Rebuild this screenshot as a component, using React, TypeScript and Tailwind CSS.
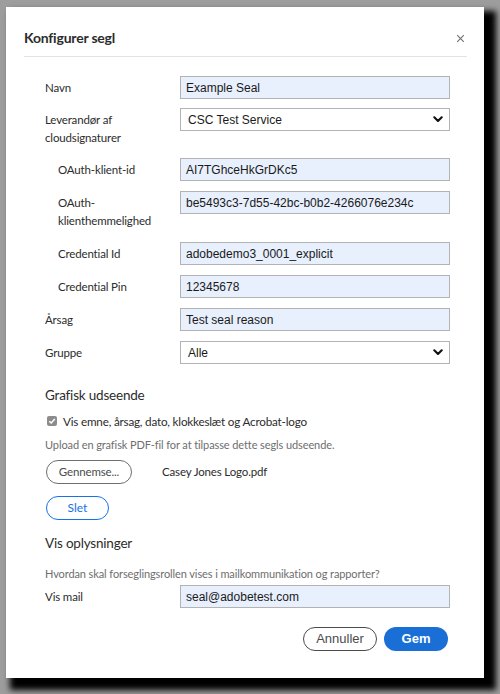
import React from "react";

function Chevron() {
  return (
    <svg width="10" height="7" viewBox="0 0 10 7" className="shrink-0 mr-[1px]">
      <path d="M1.3 1.3 L5 5 L8.7 1.3" fill="none" stroke="#111" strokeWidth="2.1" strokeLinecap="round" strokeLinejoin="round" />
    </svg>
  );
}

function TextInput({ value }: { value: string }) {
  return (
    <div className="w-[270px] h-[23px] bg-[#e8f0fe] border border-[#b3b3b3] flex items-center pl-[5px] text-[12px] text-[#1a1a1a] font-['Liberation_Sans',Arial,sans-serif]">
      {value}
    </div>
  );
}

function SelectInput({ value }: { value: string }) {
  return (
    <div className="w-[270px] h-[23px] bg-white border border-[#b3b3b3] flex items-center justify-between pl-[7px] pr-[5px] text-[12px] text-[#1a1a1a] font-['Liberation_Sans',Arial,sans-serif]">
      <span>{value}</span>
      <Chevron />
    </div>
  );
}

function Row({
  label,
  indent,
  tall,
  mb,
  children,
}: {
  label: React.ReactNode;
  indent?: boolean;
  tall?: boolean;
  mb: string;
  children: React.ReactNode;
}) {
  return (
    <div className={`flex ${tall ? "items-start h-[41px]" : "items-center h-[23px]"} ${mb}`}>
      <div
        className={`w-[135px] shrink-0 text-[11.5px] tracking-[-0.15px] leading-[18px] text-[#2c2c2c] font-['Lato','Open_Sans',sans-serif] ${indent ? "pl-[13px]" : ""} ${tall ? "pt-[3px]" : ""}`}
      >
        {label}
      </div>
      {children}
    </div>
  );
}

export default function App() {
  return (
    <div className="w-[500px] h-[694px] bg-[#9d9d9d] overflow-hidden pt-[7px] pl-[6px]">
      <div className="w-[478px] h-[671px] bg-white shadow-[8px_8px_6px_4px_#000] pl-[18px] pr-[17px] flex flex-col font-['Lato','Open_Sans',sans-serif]">
        <div className="pt-[21px] flex items-center justify-between h-[41px]">
          <div className="text-[14px] tracking-[-0.2px] leading-[20px] font-bold text-[#2c2c2c]">
            Konfigurer segl
          </div>
          <svg width="9" height="9" viewBox="0 0 9 9" className="mr-[2px]">
            <path d="M1.2 1.2 L7.8 7.8 M7.8 1.2 L1.2 7.8" stroke="#707070" strokeWidth="1.1" />
          </svg>
        </div>
        <div className="mt-[8px] border-b border-[#e3e3e3]" />

        <div className="pl-[21px] mt-[19px] flex flex-col">
          <Row label="Navn" mb="mb-[9px]">
            <TextInput value="Example Seal" />
          </Row>
          <Row label={<>Leverandør af<br />cloudsignaturer</>} tall mb="mb-[9px]">
            <SelectInput value="CSC Test Service" />
          </Row>
          <Row label="OAuth-klient-id" indent mb="mb-[10px]">
            <TextInput value="AI7TGhceHkGrDKc5" />
          </Row>
          <Row label={<>OAuth-<br />klienthemmelighed</>} indent tall mb="mb-[10px]">
            <TextInput value="be5493c3-7d55-42bc-b0b2-4266076e234c" />
          </Row>
          <Row label="Credential Id" indent mb="mb-[10px]">
            <TextInput value="adobedemo3_0001_explicit" />
          </Row>
          <Row label="Credential Pin" indent mb="mb-[10px]">
            <TextInput value="12345678" />
          </Row>
          <Row label="Årsag" mb="mb-[10px]">
            <TextInput value="Test seal reason" />
          </Row>
          <Row label="Gruppe" mb="mb-0">
            <SelectInput value="Alle" />
          </Row>

          <div className="mt-[21px] text-[13.5px] tracking-[-0.2px] leading-[20px] text-[#2c2c2c]">
            Grafisk udseende
          </div>
          <div className="mt-[7px] flex items-center h-[18px]">
            <div className="ml-[2px] w-[10px] h-[10px] rounded-[2px] bg-[#8c8c8c] flex items-center justify-center">
              <svg width="8" height="8" viewBox="0 0 8 8">
                <path d="M1.3 4.2 L3.2 6 L6.8 2" fill="none" stroke="#fff" strokeWidth="1.5" />
              </svg>
            </div>
            <span className="ml-[6px] text-[11.7px] tracking-[-0.2px] leading-[18px] text-[#2c2c2c]">
              Vis emne, årsag, dato, klokkeslæt og Acrobat-logo
            </span>
          </div>
          <div className="mt-[7px] text-[11px] tracking-[-0.1px] leading-[16px] text-[#6e6e6e]">
            Upload en grafisk PDF-fil for at tilpasse dette segls udseende.
          </div>
          <div className="mt-[7px] flex items-center">
            <div className="ml-[1px] w-[86px] h-[24px] rounded-full border border-[#6e6e6e] flex items-center justify-center text-[11.5px] tracking-[-0.15px] text-[#4b4b4b]">
              Gennemse...
            </div>
            <span className="ml-[30px] text-[11.5px] tracking-[-0.15px] text-[#2c2c2c]">
              Casey Jones Logo.pdf
            </span>
          </div>
          <div className="mt-[12px] ml-[1px] w-[63px] h-[24px] rounded-full border border-[#1473e6] flex items-center justify-center text-[12px] text-[#1473e6]">
            Slet
          </div>
          <div className="mt-[13px] text-[13.5px] tracking-[-0.2px] leading-[20px] text-[#2c2c2c]">
            Vis oplysninger
          </div>
          <div className="mt-[13px] text-[11px] tracking-[-0.1px] leading-[16px] text-[#6e6e6e]">
            Hvordan skal forseglingsrollen vises i mailkommunikation og rapporter?
          </div>
          <div className="mt-[3px]">
            <Row label="Vis mail" mb="mb-0">
              <TextInput value="seal@adobetest.com" />
            </Row>
          </div>
          <div className="mt-[19px] flex justify-end gap-[7px] pr-[19px] font-['Liberation_Sans',Arial,sans-serif]">
            <div className="w-[74px] h-[24px] rounded-full border border-[#4b4b4b] flex items-center justify-center text-[13px] text-[#4b4b4b]">
              Annuller
            </div>
            <div className="w-[64px] h-[24px] rounded-full bg-[#1a6fd6] flex items-center justify-center text-[13px] font-bold text-white">
              Gem
            </div>
          </div>
        </div>
      </div>
    </div>
  );
}
